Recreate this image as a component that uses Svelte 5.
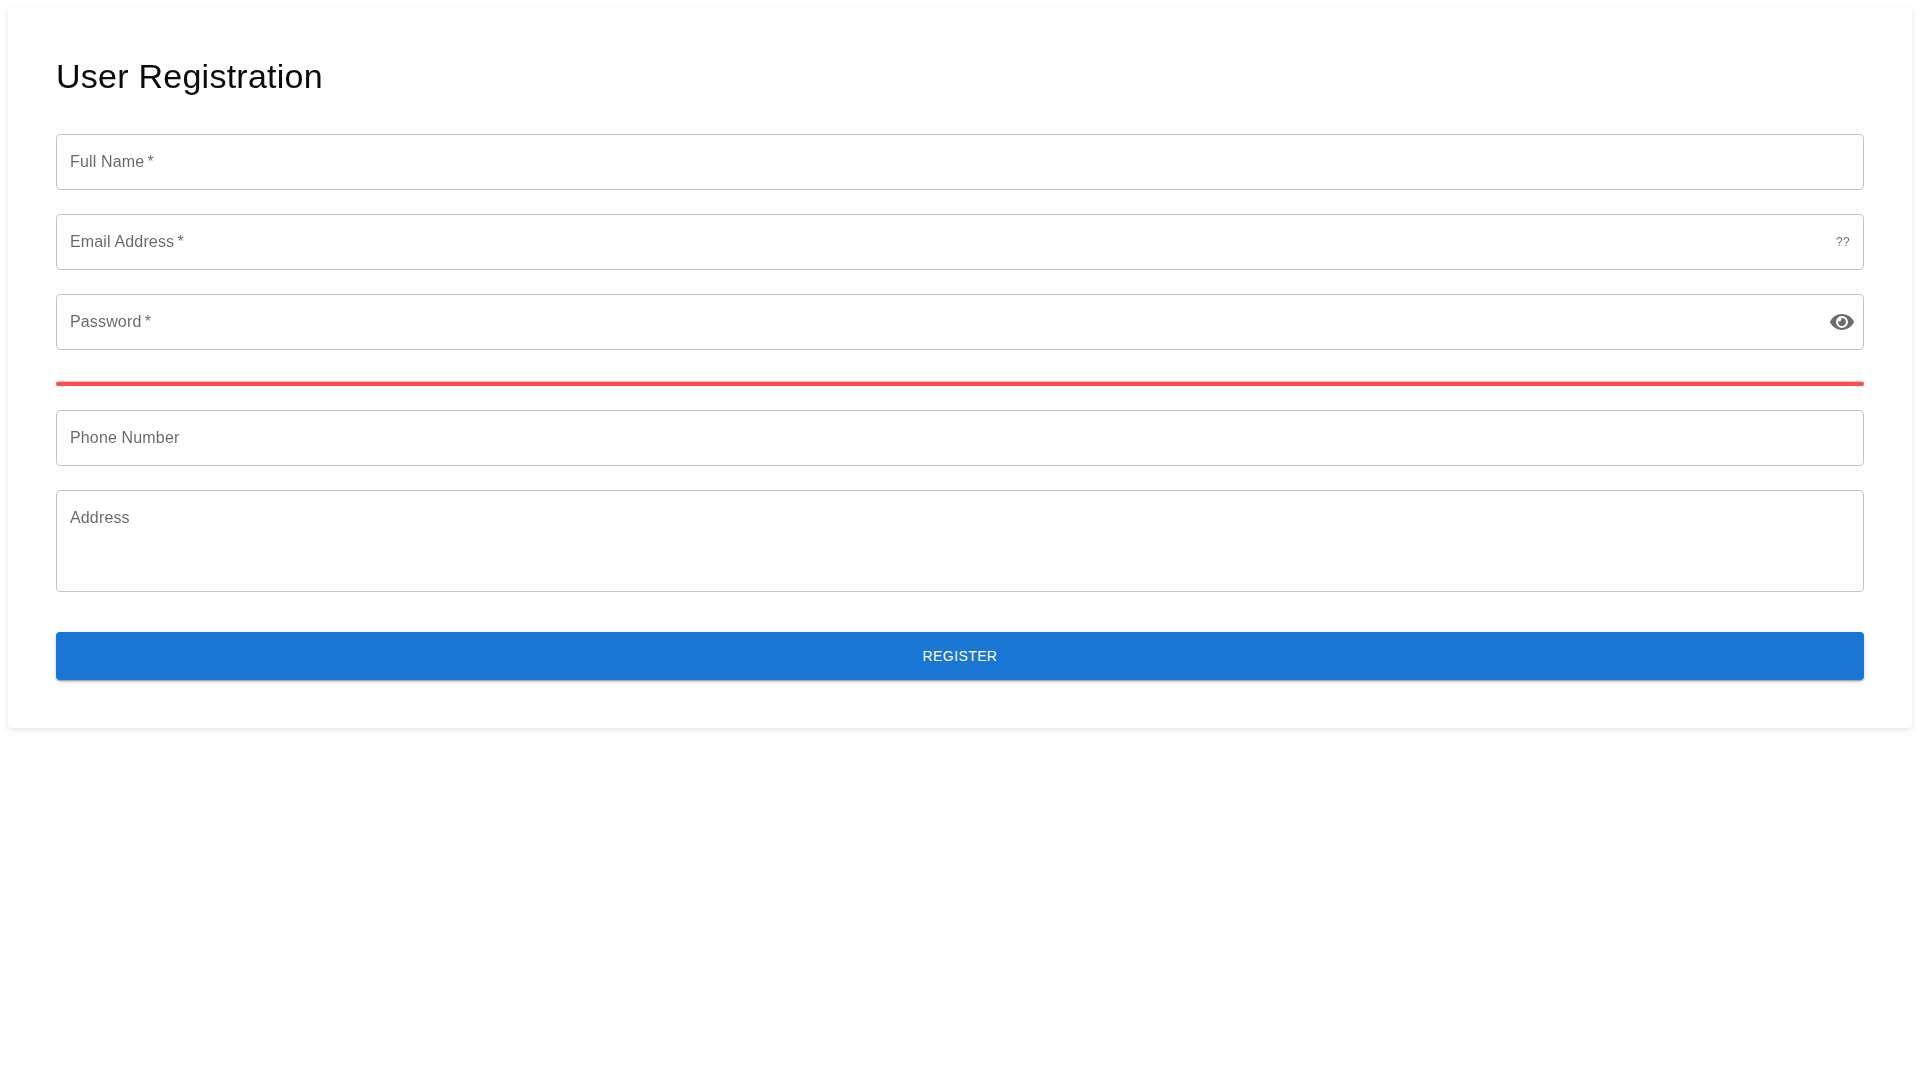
<script>
  const topFields = [
    { name: "fullName", placeholder: "Full Name\u2009*", type: "text" },
    { name: "email", placeholder: "Email Address\u2009*", type: "email", hint: "??" },
    { name: "password", placeholder: "Password\u2009*", type: "password", eye: true }
  ];
</script>

<style>
  :global(body) {
    background: #fff;
  }

  .page {
    padding: 8px;
    font-family: "Liberation Sans", Arial, sans-serif;
  }

  .paper {
    background: #fff;
    border-radius: 4px;
    padding: 48px;
    box-shadow: 0 2px 6px rgba(0, 0, 0, 0.1);
  }

  h1 {
    margin: 0 0 38px;
    font-size: 34px;
    font-weight: 400;
    line-height: 40px;
    letter-spacing: 0.25px;
    color: #0a0a0a;
    will-change: transform; /* grayscale text edges */
  }

  form {
    display: flex;
    flex-direction: column;
    gap: 24px;
  }

  .field {
    display: flex;
    align-items: center;
    height: 56px;
    box-sizing: border-box;
    padding: 0 13px;
    border: 1px solid rgba(0, 0, 0, 0.23);
    border-radius: 4px;
  }

  .field.tall {
    height: 102px;
    padding: 15px 13px;
    align-items: stretch;
  }

  .field.has-eye {
    padding-right: 9px;
  }

  input,
  textarea {
    flex: 1;
    min-width: 0;
    padding: 0 0 1px;
    border: 0;
    outline: 0;
    background: transparent;
    resize: none;
    font: 16px/23px "Liberation Sans", Arial, sans-serif;
    letter-spacing: 0.15px;
    color: rgba(0, 0, 0, 0.87);
    will-change: transform; /* grayscale text edges */
  }

  input::placeholder,
  textarea::placeholder {
    color: rgba(0, 0, 0, 0.6);
    opacity: 1;
  }

  .hint {
    font-size: 12px;
    letter-spacing: 0.4px;
    color: rgba(0, 0, 0, 0.6);
    margin-bottom: 1px;
    will-change: transform;
  }

  .eye {
    width: 24px;
    height: 24px;
    fill: rgba(0, 0, 0, 0.58);
  }

  .strength {
    height: 4px;
    margin: 8px 0 0;
    border-radius: 2px;
    background: #ff4d4f;
    box-shadow: 0 -1px 0 rgba(255, 77, 79, 0.4);
  }

  button {
    height: 48px;
    margin-top: 16px;
    border: 0;
    border-radius: 4px;
    background: #1976d2;
    color: #fff;
    font: 14px "Liberation Sans", Arial, sans-serif;
    letter-spacing: 0.4px;
    text-transform: uppercase;
    box-shadow: 0 3px 1px -2px rgba(0, 0, 0, 0.2), 0 2px 2px 0 rgba(0, 0, 0, 0.14), 0 1px 5px 0 rgba(0, 0, 0, 0.12);
  }
</style>

<div class="page">
  <div class="paper">
    <h1>User Registration</h1>
    <form>
      {#each topFields as field (field.name)}
        <div class="field" class:has-eye={field.eye}>
          <input type={field.type} name={field.name} placeholder={field.placeholder} />
          {#if field.hint}
            <span class="hint">{field.hint}</span>
          {/if}
          {#if field.eye}
            <svg class="eye" viewBox="0 0 576 576">
              <path d="M572.52 273.4C518.29 167.59 410.93 96 288 96S57.68 167.64 3.48 273.41a32.35 32.35 0 0 0 0 29.19C57.71 408.41 165.07 480 288 480s230.32-71.64 284.52-177.41a32.35 32.35 0 0 0 0-29.19zM288 432a144 144 0 1 1 144-144 143.93 143.93 0 0 1-144 144zm0-240a95.31 95.31 0 0 0-25.31 3.79 47.85 47.85 0 0 1-66.9 66.9A95.78 95.78 0 1 0 288 192z" />
            </svg>
          {/if}
        </div>
      {/each}
      <div class="strength"></div>
      <div class="field">
        <input type="tel" name="phone" placeholder="Phone Number" />
      </div>
      <div class="field tall">
        <textarea name="address" placeholder="Address"></textarea>
      </div>
      <button type="button">Register</button>
    </form>
  </div>
</div>
